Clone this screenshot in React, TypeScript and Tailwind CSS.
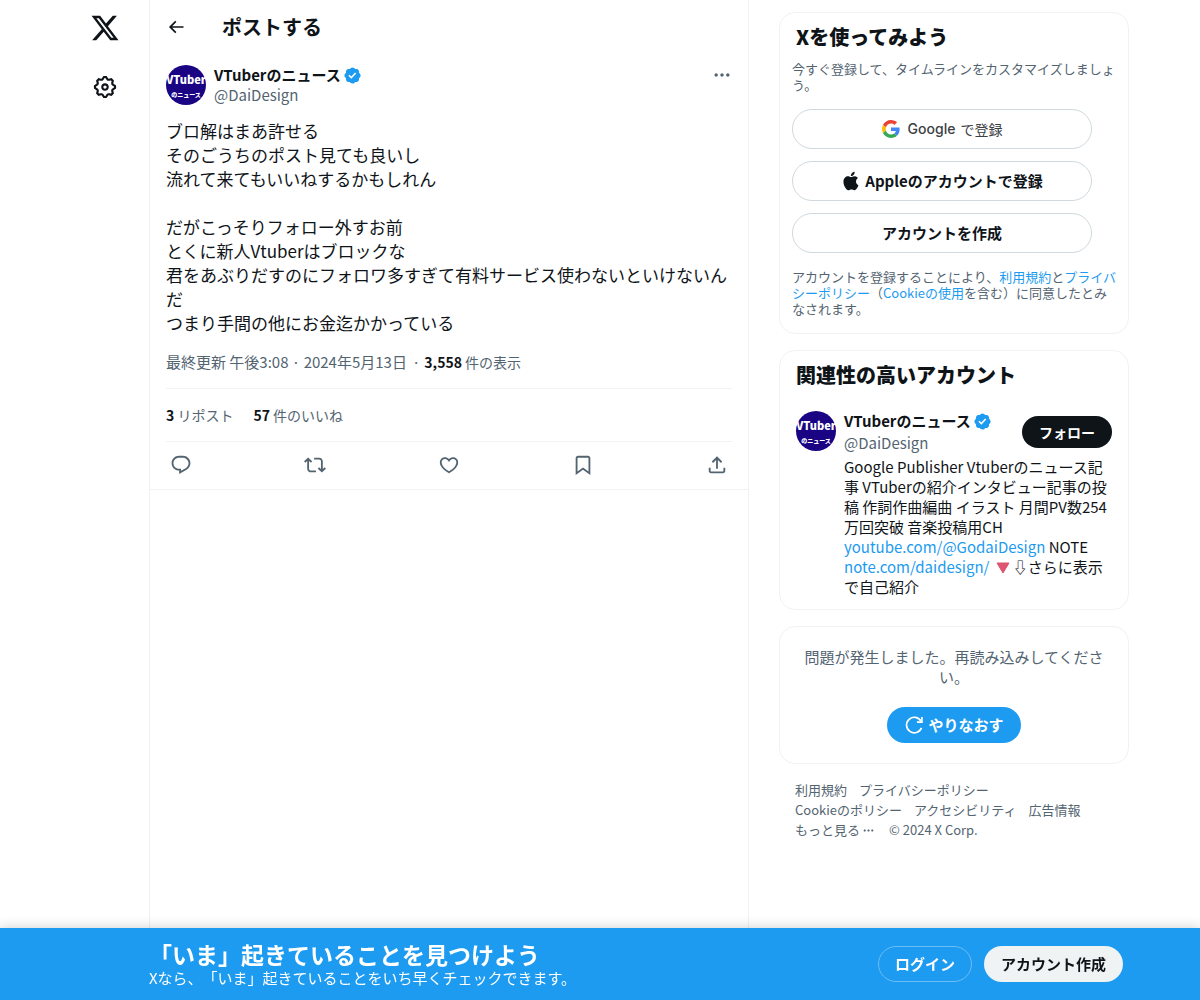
import type { ReactNode } from 'react';

const paths = {
  x: 'M18.244 2.25h3.308l-7.227 8.26 8.502 11.24H16.17l-5.214-6.817L4.99 21.75H1.68l7.73-8.835L1.254 2.25H8.08l4.713 6.231zm-1.161 17.52h1.833L7.084 4.126H5.117z',
  back: 'M7.414 13l5.043 5.04-1.414 1.42L3.586 12l7.457-7.46 1.414 1.42L7.414 11H21v2H7.414z',
  gear: 'M10.54 1.75h2.92l1.57 2.36c.11.17.32.25.53.21l2.53-.59 2.17 2.17-.58 2.54c-.05.2.04.41.21.53l2.36 1.57v2.92l-2.36 1.57c-.17.12-.26.33-.21.53l.58 2.54-2.17 2.17-2.53-.59c-.21-.04-.42.04-.53.21l-1.57 2.36h-2.92l-1.58-2.36c-.11-.17-.32-.25-.52-.21l-2.54.59-2.17-2.17.58-2.54c.05-.2-.03-.41-.21-.53l-2.35-1.57v-2.92L4.1 8.97c.18-.12.26-.33.21-.53L3.73 5.9 5.9 3.73l2.54.59c.2.04.41-.04.52-.21l1.58-2.36zm1.07 2l-.98 1.47C10.05 6.08 9 6.5 7.99 6.27l-1.46-.34-.6.6.33 1.46c.24 1.01-.18 2.07-1.05 2.64l-1.46.98v.78l1.46.98c.87.57 1.29 1.63 1.05 2.64l-.33 1.46.6.6 1.46-.34c1.01-.23 2.06.19 2.64 1.05l.98 1.47h.78l.97-1.47c.58-.86 1.63-1.28 2.65-1.05l1.45.34.61-.6-.34-1.46c-.23-1.01.18-2.07 1.05-2.64l1.47-.98v-.78l-1.47-.98c-.87-.57-1.28-1.63-1.05-2.64l.34-1.46-.61-.6-1.45.34c-1.02.23-2.07-.19-2.65-1.05l-.97-1.47h-.78zM12 10.5c-.83 0-1.5.67-1.5 1.5s.67 1.5 1.5 1.5c.82 0 1.5-.67 1.5-1.5s-.68-1.5-1.5-1.5zM8.5 12c0-1.93 1.56-3.5 3.5-3.5 1.93 0 3.5 1.57 3.5 3.5s-1.57 3.5-3.5 3.5c-1.94 0-3.5-1.57-3.5-3.5z',
  more: 'M3 12c0-1.1.9-2 2-2s2 .9 2 2-.9 2-2 2-2-.9-2-2zm9 2c1.1 0 2-.9 2-2s-.9-2-2-2-2 .9-2 2 .9 2 2 2zm7 0c1.1 0 2-.9 2-2s-.9-2-2-2-2 .9-2 2 .9 2 2 2z',
  reply: 'M1.751 10c0-4.42 3.584-8 8.005-8h4.366c4.49 0 8.129 3.64 8.129 8.13 0 2.96-1.607 5.68-4.196 7.11l-8.054 4.46v-3.69h-.067c-4.49.1-8.183-3.51-8.183-8.01zm8.005-6c-3.317 0-6.005 2.69-6.005 6 0 3.37 2.77 6.08 6.138 6.01l.351-.01h1.761v2.3l5.087-2.81c1.951-1.08 3.163-3.13 3.163-5.36 0-3.39-2.744-6.13-6.129-6.13H9.756z',
  repost: 'M4.5 3.88l4.432 4.14-1.364 1.46L5.5 7.55V16c0 1.1.896 2 2 2H13v2H7.5c-2.209 0-4-1.79-4-4V7.55L1.432 9.48.068 8.02 4.5 3.88zM16.5 6H11V4h5.5c2.209 0 4 1.79 4 4v8.45l2.068-1.93 1.364 1.46-4.432 4.14-4.432-4.14 1.364-1.46 2.068 1.93V8c0-1.1-.896-2-2-2z',
  like: 'M16.697 5.5c-1.222-.06-2.679.51-3.89 2.16l-.805 1.09-.806-1.09C9.984 6.01 8.526 5.44 7.304 5.5c-1.243.07-2.349.78-2.91 1.91-.552 1.12-.633 2.78.479 4.82 1.074 1.97 3.257 4.27 7.129 6.61 3.87-2.34 6.052-4.64 7.126-6.61 1.111-2.04 1.03-3.7.477-4.82-.561-1.13-1.666-1.84-2.908-1.91zm4.187 7.69c-1.351 2.48-4.001 5.12-8.379 7.67l-.503.3-.504-.3c-4.379-2.55-7.029-5.19-8.382-7.67-1.36-2.5-1.41-4.86-.514-6.67.887-1.79 2.647-2.91 4.601-3.01 1.651-.09 3.368.56 4.798 2.01 1.429-1.45 3.146-2.1 4.796-2.01 1.954.1 3.714 1.22 4.601 3.01.896 1.81.846 4.17-.514 6.67z',
  bookmark: 'M4 4.5C4 3.12 5.119 2 6.5 2h11C18.881 2 20 3.12 20 4.5v18.44l-8-5.71-8 5.71V4.5zM6.5 4c-.276 0-.5.22-.5.5v14.56l6-4.29 6 4.29V4.5c0-.28-.224-.5-.5-.5h-11z',
  share: 'M12 2.59l5.7 5.7-1.41 1.42L13 6.41V16h-2V6.41l-3.3 3.3-1.41-1.42L12 2.59zM21 15l-.02 3.51c0 1.38-1.12 2.49-2.5 2.49H5.5C4.11 21 3 19.88 3 18.5V15h2v3.5c0 .28.22.5.5.5h12.98c.28 0 .5-.22.5-.5L19 15h2z',
  apple: 'M16.365 1.43c0 1.14-.493 2.27-1.177 3.08-.744.9-1.99 1.57-2.987 1.57-.12 0-.23-.02-.3-.03-.01-.06-.04-.22-.04-.39 0-1.15.572-2.27 1.206-2.98.804-.94 2.142-1.64 3.248-1.68.03.13.05.28.05.43zm4.565 15.71c-.03.07-.463 1.58-1.518 3.12-.945 1.34-1.94 2.71-3.43 2.71-1.517 0-1.9-.88-3.63-.88-1.698 0-2.302.91-3.67.91-1.377 0-2.332-1.26-3.428-2.8-1.287-1.82-2.323-4.63-2.323-7.28 0-4.28 2.797-6.55 5.552-6.55 1.448 0 2.675.95 3.6.95.865 0 2.222-1.01 3.902-1.01.613 0 2.886.06 4.374 2.19-.13.09-2.383 1.37-2.383 4.19 0 3.26 2.854 4.42 2.955 4.45z',
};

function Icon({ name, className }: { name: keyof typeof paths; className: string }) {
  return (
    <svg viewBox="0 0 24 24" fill="currentColor" aria-hidden="true" className={className}>
      <path d={paths[name]} />
    </svg>
  );
}

function Verified() {
  return (
    <svg viewBox="0 0 22 22" fill="#1d9bf0" role="img" aria-label="認証済みアカウント" className="size-[19px] shrink-0">
      <path d="M20.396 11c-.018-.646-.215-1.275-.57-1.816-.354-.54-.852-.972-1.438-1.246.223-.607.27-1.264.14-1.897-.131-.634-.437-1.218-.882-1.687-.47-.445-1.053-.75-1.687-.882-.633-.13-1.29-.083-1.897.14-.273-.587-.704-1.086-1.245-1.44S11.647 1.62 11 1.604c-.646.017-1.273.213-1.813.568s-.969.854-1.24 1.44c-.608-.223-1.267-.272-1.902-.14-.635.13-1.22.436-1.69.882-.445.47-.749 1.055-.878 1.688-.13.633-.08 1.29.144 1.896-.587.274-1.087.705-1.443 1.245-.356.54-.555 1.17-.574 1.817.02.647.218 1.276.574 1.817.356.54.856.972 1.443 1.245-.224.606-.274 1.263-.144 1.896.13.634.433 1.218.877 1.688.47.443 1.054.747 1.687.878.633.132 1.29.084 1.897-.136.274.586.705 1.084 1.246 1.439.54.354 1.17.551 1.816.569.647-.016 1.276-.213 1.817-.567s.972-.854 1.245-1.44c.604.239 1.266.296 1.903.164.636-.132 1.22-.447 1.68-.907.46-.46.776-1.044.908-1.681s.075-1.299-.165-1.903c.586-.274 1.084-.705 1.439-1.246.354-.54.551-1.17.569-1.816zM9.662 14.85l-3.429-3.428 1.293-1.302 2.072 2.072 4.4-4.794 1.347 1.246z" />
    </svg>
  );
}

function GoogleLogo() {
  return (
    <svg viewBox="0 0 48 48" aria-hidden="true" className="size-[18px]">
      <path fill="#EA4335" d="M24 9.5c3.54 0 6.71 1.22 9.21 3.6l6.85-6.85C35.9 2.38 30.47 0 24 0 14.62 0 6.51 5.38 2.56 13.22l7.98 6.19C12.43 13.72 17.74 9.5 24 9.5z" />
      <path fill="#4285F4" d="M46.98 24.55c0-1.57-.15-3.09-.38-4.55H24v9.02h12.94c-.58 2.96-2.26 5.48-4.78 7.18l7.73 6c4.51-4.18 7.09-10.36 7.09-17.65z" />
      <path fill="#FBBC05" d="M10.53 28.59c-.48-1.45-.76-2.99-.76-4.59s.27-3.14.76-4.59l-7.98-6.19C.92 16.46 0 20.12 0 24c0 3.88.92 7.54 2.56 10.78l7.97-6.19z" />
      <path fill="#34A853" d="M24 48c6.48 0 11.93-2.13 15.89-5.81l-7.73-6c-2.15 1.45-4.92 2.3-8.16 2.3-6.26 0-11.57-4.22-13.47-9.91l-7.98 6.19C6.51 42.62 14.62 48 24 48z" />
    </svg>
  );
}

function Avatar() {
  return (
    <a
      href="#profile"
      className="flex size-10 shrink-0 flex-col items-center justify-center rounded-full bg-[#1a0484] pt-1 font-black whitespace-nowrap text-white"
    >
      <span className="text-[11px] leading-4">VTuber</span>
      <span className="text-[6px] leading-4">のニュース</span>
    </a>
  );
}

function Card({ title, children }: { title?: string; children: ReactNode }) {
  return (
    <section className="rounded-2xl border border-[#eff3f4]">
      {title && <h2 className="px-4 pt-3 text-xl leading-6 font-black">{title}</h2>}
      {children}
    </section>
  );
}

function OutlineButton({ children }: { children: ReactNode }) {
  return (
    <button className="flex h-10 w-full max-w-[300px] items-center justify-center rounded-full border border-[#cfd9de] text-[15px] font-bold">
      {children}
    </button>
  );
}

function Link({ children }: { children: ReactNode }) {
  return (
    <a href="#link" className="text-[#1d9bf0]">
      {children}
    </a>
  );
}

const actions = [
  ['reply', '返信'],
  ['repost', 'リポスト'],
  ['like', 'いいね'],
  ['bookmark', 'ブックマーク'],
  ['share', '共有'],
] as const;

const postText = `ブロ解はまあ許せる
そのごうちのポスト見ても良いし
流れて来てもいいねするかもしれん

だがこっそりフォロー外すお前
とくに新人Vtuberはブロックな
君をあぶりだすのにフォロワ多すぎて有料サービス使わないといけないんだ
つまり手間の他にお金迄かかっている`;

function Post() {
  return (
    <article className="border-b border-[#eff3f4] px-4 pt-3">
      <div className="flex gap-2">
        <Avatar />
        <div className="min-w-0 flex-1 text-[15px] leading-5">
          <div className="flex items-center gap-[2px] font-bold">
            VTuberのニュース
            <Verified />
          </div>
          <div className="text-[#536471]">@DaiDesign</div>
        </div>
        <button aria-label="もっと見る" className="h-5 self-start text-[#536471]">
          <Icon name="more" className="size-5" />
        </button>
      </div>
      <p className="mt-[14px] text-[17px] leading-6 whitespace-pre-wrap">{postText}</p>
      <div className="mt-[17px] flex border-b border-[#eff3f4] pb-4 text-[15px] leading-5 text-[#536471]">
        <span>最終更新 午後3:08 · 2024年5月13日</span>
        <span className="pr-1 pl-[5px]">·</span>
        <span className="text-sm leading-5">
          <b className="text-[#0f1419]">3,558</b> 件の表示
        </span>
      </div>
      <div className="flex gap-5 border-b border-[#eff3f4] py-4 text-sm leading-5 text-[#536471]">
        <span>
          <b className="text-[#0f1419]">3</b> リポスト
        </span>
        <span>
          <b className="text-[#0f1419]">57</b> 件のいいね
        </span>
      </div>
      <div className="flex h-[47px] items-center justify-between px-1 pb-px text-[#536471]">
        {actions.map(([icon, label]) => (
          <button key={icon} aria-label={label}>
            <Icon name={icon} className="size-[22px]" />
          </button>
        ))}
      </div>
    </article>
  );
}

function Sidebar() {
  return (
    <aside className="flex w-[350px] shrink-0 flex-col gap-4 pt-3 pb-24">
      <Card title="Xを使ってみよう">
        <div className="pr-2 pb-4 pl-3">
          <p className="mt-3 text-[13px] leading-4 text-[#536471]">
            今すぐ登録して、タイムラインをカスタマイズしましょう。
          </p>
          <div className="mt-4 flex flex-col gap-3">
            <button className="flex h-10 w-full max-w-[300px] items-center justify-center gap-2 rounded-full border border-[#cfd9de] text-sm text-[#3c4043]">
              <GoogleLogo />
              <span className="flex items-center gap-[5px]">
                <span className="font-['Inter'] font-medium">Google</span>
                <span>で登録</span>
              </span>
            </button>
            <OutlineButton>
              <Icon name="apple" className="mr-1 size-5" />
              Appleのアカウントで登録
            </OutlineButton>
            <OutlineButton>アカウントを作成</OutlineButton>
          </div>
          <p className="mt-4 text-[13px] leading-4 text-[#536471]">
            アカウントを登録することにより、<Link>利用規約</Link>と<Link>プライバシーポリシー</Link>（
            <Link>Cookieの使用</Link>を含む）に同意したとみなされます。
          </p>
        </div>
      </Card>

      <Card title="関連性の高いアカウント">
        <div className="mt-6 flex gap-2 px-4 pb-3">
          <Avatar />
          <div className="min-w-0 flex-1 text-[15px] leading-5">
            <div className="flex items-center justify-between">
              <div>
                <div className="flex items-center gap-[2px] font-bold">
                  VTuberのニュース
                  <Verified />
                </div>
                <div className="mt-[2px] text-[#536471]">@DaiDesign</div>
              </div>
              <button className="h-8 rounded-full bg-[#0f1419] px-[17px] text-sm font-bold text-white">フォロー</button>
            </div>
            <p className="mt-1">
              Google Publisher Vtuberのニュース記事 VTuberの紹介インタビュー記事の投稿 作詞作曲編曲 イラスト
              月間PV数254万回突破 音楽投稿用CH <Link>youtube.com/@GodaiDesign</Link> NOTE{' '}
              <Link>note.com/daidesign/</Link>{' '}
              <svg viewBox="0 0 20 18" aria-hidden="true" className="inline h-[18px] w-5 align-[-4px]">
                <path d="M4 4h12l-6 10z" fill="#dd5571" stroke="#dd5571" strokeLinejoin="round" />
              </svg>
              ⇩さらに表示で自己紹介
            </p>
          </div>
        </div>
      </Card>

      <Card>
        <div className="flex flex-col items-center px-5 py-5">
          <p className="text-center text-[15px] leading-5 text-[#536471] [text-spacing-trim:space-all]">
            問題が発生しました。再読み込みしてください。
          </p>
          <button className="mt-5 flex h-9 items-center gap-1 rounded-full bg-[#1d9bf0] px-[17px] text-[15px] font-bold text-white">
            <svg viewBox="0 0 24 24" fill="none" stroke="currentColor" strokeWidth="2" aria-hidden="true" className="size-5">
              <path d="M21 15.5A9.3 9.3 0 1 1 20.5 7.5" />
              <path d="M21.5 2.5V8.5H15.5" />
            </svg>
            やりなおす
          </button>
        </div>
      </Card>

      <nav className="flex flex-wrap gap-x-3 pr-8 pl-4 text-[13px] leading-5 text-[#536471]">
        <a href="#terms">利用規約</a>
        <a href="#privacy">プライバシーポリシー</a>
        <a href="#cookies">Cookieのポリシー</a>
        <a href="#accessibility">アクセシビリティ</a>
        <a href="#ads">広告情報</a>
        <button className="mr-[2px] flex items-center gap-[2px]">
          もっと見る
          <Icon name="more" className="size-[13px]" />
        </button>
        <span>© 2024 X Corp.</span>
      </nav>
    </aside>
  );
}

export default function App() {
  return (
    <div className="flex min-h-screen bg-white font-['Noto_Sans_CJK_JP',sans-serif] text-[#0f1419]">
      <header className="flex min-w-[88px] flex-1 flex-col items-end gap-[31px] pt-[13px] pr-[29px]">
        <a href="#home" aria-label="X">
          <Icon name="x" className="size-[30px]" />
        </a>
        <a href="#settings" aria-label="設定" className="pr-[2px]">
          <Icon name="gear" className="size-[26px]" />
        </a>
      </header>

      <div className="flex w-full max-w-[1051px] gap-[30px]">
        <main className="min-w-0 max-w-[600px] flex-1 border-x border-[#eff3f4]">
          <div className="flex h-[53px] items-center gap-9 px-4">
            <button aria-label="戻る">
              <Icon name="back" className="size-5" />
            </button>
            <h1 className="text-xl leading-6 font-bold">ポストする</h1>
          </div>
          <Post />
        </main>
        <Sidebar />
      </div>

      <div className="fixed inset-x-0 bottom-0 flex bg-[#1d9bf0] text-white shadow-[0_0_12px_rgba(0,0,0,0.2)]">
        <div className="min-w-[88px] flex-1" />
        <div className="flex h-[72px] w-full max-w-[1051px] items-center justify-between pr-[77px]">
          <div className="[text-spacing-trim:space-all]">
            <p className="text-[23px] leading-7 font-bold">「いま」起きていることを見つけよう</p>
            <p className="text-[15px] leading-5">Xなら、「いま」起きていることをいち早くチェックできます。</p>
          </div>
          <div className="flex gap-3 text-[15px] font-bold">
            <button className="h-9 rounded-full border border-[#6bbef6] px-4">ログイン</button>
            <button className="h-9 rounded-full bg-[#eff3f4] px-[17px] text-[#0f1419]">アカウント作成</button>
          </div>
        </div>
      </div>
    </div>
  );
}
